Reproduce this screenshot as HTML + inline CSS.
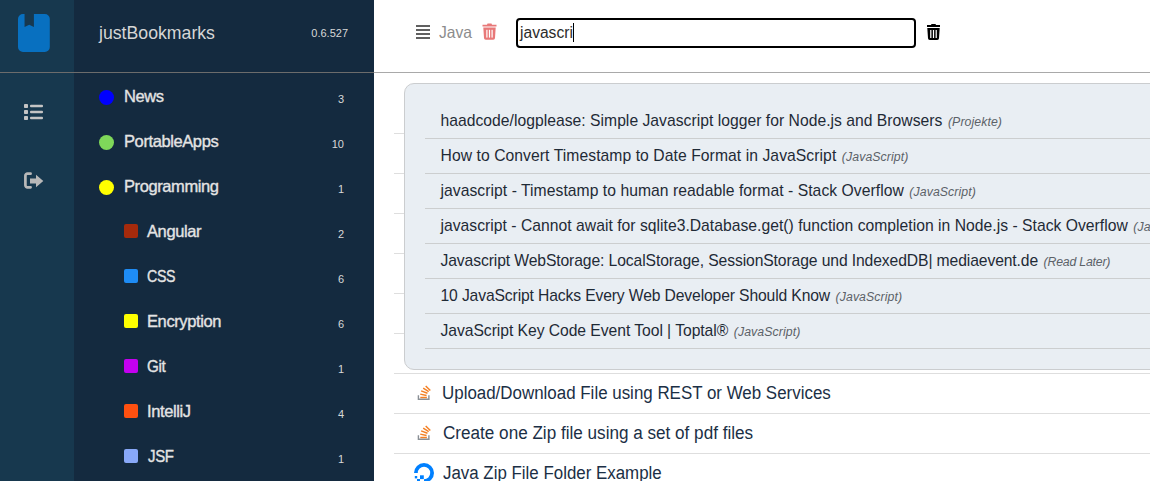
<!DOCTYPE html>
<html><head><meta charset="utf-8">
<style>
*{margin:0;padding:0;box-sizing:border-box}
html,body{width:1150px;height:481px;overflow:hidden;background:#fff;font-family:"Liberation Sans",sans-serif}
.a{position:absolute;white-space:nowrap;line-height:normal}
#rail{position:absolute;left:0;top:0;width:74px;height:481px;background:#17384e}
#side{position:absolute;left:74px;top:0;width:300px;height:481px;background:#142a3f}
.hl{position:absolute;height:1px}
.cat{transform-origin:0 0;color:#e4e4e4;font-size:16.5px;letter-spacing:-0.4px;-webkit-text-stroke:0.35px #e4e4e4}
.cnt{color:#d8d8d8;font-size:11px}
.dot{position:absolute;width:15px;height:15px;border-radius:50%}
.sq{position:absolute;width:14px;height:14px;border-radius:2px}
.div{position:absolute;height:1px;background:#dedede}
#panel{position:absolute;left:404px;top:83px;width:800px;height:287px;background:#e9eef3;border:1px solid #cbcdcf;border-radius:10px}
.pdiv{position:absolute;left:425px;width:725px;height:1px;background:#cccecf}
.pt{color:#1f2a36;font-size:15.7px}
.pt i{letter-spacing:0.08px;color:#5c6268;font-size:12.3px;font-style:italic;margin-left:5.5px}
.rt{color:#1b2f45;font-size:17.6px;transform-origin:0 0}
</style></head><body>
<div id="rail"></div>
<div id="side"></div>
<div class="hl" style="left:0;top:72px;width:374px;background:#6c6c6c"></div>
<div class="hl" style="left:374px;top:72px;width:776px;background:#a9a9a9"></div>

<!-- logo -->
<svg class="a" style="left:18px;top:14px" width="31.8" height="38" viewBox="0 0 32 38" preserveAspectRatio="none">
<path d="M5 0H6.6V13L11.3 10.8L16 13V0H27A5 5 0 0 1 32 5V33A5 5 0 0 1 27 38H5A5 5 0 0 1 0 33V5A5 5 0 0 1 5 0Z" fill="#0870c0"/>
</svg>
<div class="a" style="left:98.6px;top:21.9px;font-size:18.6px;color:#d6d6d6;transform-origin:0 0;transform:scaleX(0.951)">justBookmarks</div>
<div class="a cnt" style="right:802px;top:27px;">0.6.527</div>

<!-- rail icons -->
<svg class="a" style="left:24px;top:104px" width="20" height="16" viewBox="0 0 20 16">
<g fill="#c4c4c4"><rect x="0" y="0" width="4" height="4" rx="0.8"/><rect x="0" y="6" width="4" height="4" rx="0.8"/><rect x="0" y="12" width="4" height="4" rx="0.8"/>
<rect x="6" y="0.7" width="13" height="2.6" rx="1"/><rect x="6" y="6.7" width="13" height="2.6" rx="1"/><rect x="6" y="12.7" width="13" height="2.6" rx="1"/></g>
</svg>
<svg class="a" style="left:23px;top:172px" width="22" height="18" viewBox="0 0 22 18">
<path d="M7.6 1.7H4.5A2 2 0 0 0 2.4 3.7V13.3A2 2 0 0 0 4.5 15.3H7.6" fill="none" stroke="#b8b8b8" stroke-width="2.7" stroke-linecap="round"/>
<path d="M7 6.6H13V2.8L20.3 9L13 15.2V11.4H7Z" fill="#b8b8b8"/>
</svg>

<!-- categories -->
<div class="dot" style="left:99px;top:90px;background:#0000ff"></div>
<div class="a cat" style="left:124px;top:87.2px">News</div>
<div class="a cnt" style="right:806px;top:93px">3</div>

<div class="dot" style="left:99px;top:135px;background:#7fd85a"></div>
<div class="a cat" style="left:124px;top:132.2px">PortableApps</div>
<div class="a cnt" style="right:806px;top:138px">10</div>

<div class="dot" style="left:99px;top:180px;background:#ffff00"></div>
<div class="a cat" style="left:124px;top:177.2px">Programming</div>
<div class="a cnt" style="right:806px;top:183px">1</div>

<div class="sq" style="left:124px;top:224px;background:#a52a0c"></div>
<div class="a cat" style="left:147px;top:222.2px">Angular</div>
<div class="a cnt" style="right:806px;top:228px">2</div>

<div class="sq" style="left:124px;top:269px;background:#1e8cf5"></div>
<div class="a cat" style="left:147px;top:267.2px;transform:scaleX(0.86)">CSS</div>
<div class="a cnt" style="right:806px;top:273px">6</div>

<div class="sq" style="left:124px;top:314px;background:#ffff00"></div>
<div class="a cat" style="left:147px;top:312.2px">Encryption</div>
<div class="a cnt" style="right:806px;top:318px">6</div>

<div class="sq" style="left:124px;top:359px;background:#c400f0"></div>
<div class="a cat" style="left:147px;top:357.2px;transform:scaleX(0.92)">Git</div>
<div class="a cnt" style="right:806px;top:363px">1</div>

<div class="sq" style="left:124px;top:404px;background:#ff5010"></div>
<div class="a cat" style="left:147px;top:402.2px">IntelliJ</div>
<div class="a cnt" style="right:806px;top:408px">4</div>

<div class="sq" style="left:124px;top:449px;background:#88a8f8"></div>
<div class="a cat" style="left:148px;top:447.2px;transform:scaleX(0.91)">JSF</div>
<div class="a cnt" style="right:806px;top:453px">1</div>

<!-- top bar -->
<svg class="a" style="left:416px;top:25px" width="14" height="14" viewBox="0 0 14 14">
<g fill="#606060"><rect x="0" y="0" width="14" height="2"/><rect x="0" y="4" width="14" height="2"/><rect x="0" y="8" width="14" height="2"/><rect x="0" y="12" width="14" height="2"/></g>
</svg>
<div class="a" style="left:439px;top:22.9px;font-size:16.5px;color:#8c8c8c;transform-origin:0 0;transform:scaleX(0.947)">Java</div>
<svg class="a" style="left:482px;top:23px" width="15" height="17" viewBox="0 0 15 17">
<path d="M5.5 0.5H9.5L10 1.8H14.5V3.6H0.5V1.8H5Z M1.3 4.6H13.7L13 15A1.8 1.8 0 0 1 11.2 16.8H3.8A1.8 1.8 0 0 1 2 15Z" fill="#e87878"/>
<g fill="#fff"><rect x="4.3" y="6.8" width="1.2" height="7.8"/><rect x="6.9" y="6.8" width="1.2" height="7.8"/><rect x="9.5" y="6.8" width="1.2" height="7.8"/></g>
</svg>
<div class="a" style="left:516px;top:18px;width:400px;height:30px;border:2px solid #000;border-radius:4px"></div>
<div class="a" style="left:520px;top:23.8px;font-size:15.6px;color:#2b2b2b">javascri</div>
<div class="a" style="left:573px;top:23px;width:1px;height:19px;background:#000"></div>
<svg class="a" style="left:926px;top:24px" width="15" height="16" viewBox="0 0 15 16">
<path d="M5.5 0H9.5L10 1H14V3H1V1H5Z M1.3 4H13.7L13 14.2A1.8 1.8 0 0 1 11.2 16H3.8A1.8 1.8 0 0 1 2 14.2Z" fill="#000"/>
<g fill="#fff"><rect x="4.2" y="6" width="1.2" height="8"/><rect x="6.9" y="6" width="1.2" height="8"/><rect x="9.6" y="6" width="1.2" height="8"/></g>
</svg>

<!-- underlying list dividers -->
<div class="div" style="left:394px;top:133px;width:756px"></div>
<div class="div" style="left:394px;top:173px;width:756px"></div>
<div class="div" style="left:394px;top:213px;width:756px"></div>
<div class="div" style="left:394px;top:253px;width:756px"></div>
<div class="div" style="left:394px;top:293px;width:756px"></div>
<div class="div" style="left:394px;top:333px;width:756px"></div>
<div class="div" style="left:394px;top:373px;width:756px"></div>
<div class="div" style="left:394px;top:413px;width:756px"></div>
<div class="div" style="left:394px;top:453px;width:756px"></div>

<!-- rows -->
<svg class="a" style="left:412px;top:382px" width="24" height="22" viewBox="0 0 24 22">
<path d="M6.4 13.2V17.2H16.9V13.2" fill="none" stroke="#8a9096" stroke-width="1.4"/>
<g stroke="#f48024" stroke-width="1.45" fill="none"><path d="M8.3 15.5H14.9"/><path d="M8.2 12.1L14.6 13.5"/><path d="M9.1 8.9L15.5 11.2"/><path d="M11.2 6.2L16.7 9.6"/><path d="M13.7 3.9L18.3 8.5"/></g>
</svg>
<div class="a rt" style="left:442px;top:382.6px;transform:scaleX(0.9618)">Upload/Download File using REST or Web Services</div>
<svg class="a" style="left:412px;top:422px" width="24" height="22" viewBox="0 0 24 22">
<path d="M6.4 13.2V17.2H16.9V13.2" fill="none" stroke="#8a9096" stroke-width="1.4"/>
<g stroke="#f48024" stroke-width="1.45" fill="none"><path d="M8.3 15.5H14.9"/><path d="M8.2 12.1L14.6 13.5"/><path d="M9.1 8.9L15.5 11.2"/><path d="M11.2 6.2L16.7 9.6"/><path d="M13.7 3.9L18.3 8.5"/></g>
</svg>
<div class="a rt" style="left:442.5px;top:422.8px;transform:scaleX(0.9726)">Create one Zip file using a set of pdf files</div>
<svg class="a" style="left:413.8px;top:462px" width="22" height="22" viewBox="0 0 22 22">
<path d="M10 21V17.2A6.2 6.2 0 1 0 3.8 11H0A10 10 0 1 1 10 21Z" fill="#0080ff"/>
<rect x="6" y="13.3" width="3.8" height="3.8" fill="#0080ff"/><rect x="3" y="17" width="3" height="3" fill="#0080ff"/><rect x="0.8" y="14" width="2.4" height="2.4" fill="#0080ff"/>
</svg>
<div class="a rt" style="left:442.5px;top:462.8px;transform:scaleX(0.9599)">Java Zip File Folder Example</div>

<!-- dropdown panel -->
<div id="panel"></div>
<div class="pdiv" style="top:138px"></div>
<div class="pdiv" style="top:173px"></div>
<div class="pdiv" style="top:208px"></div>
<div class="pdiv" style="top:243px"></div>
<div class="pdiv" style="top:278px"></div>
<div class="pdiv" style="top:313px"></div>
<div class="pdiv" style="top:348px"></div>
<div class="a pt" style="left:440.5px;top:112.1px;letter-spacing:0.02px">haadcode/logplease: Simple Javascript logger for Node.js and Browsers<i>(Projekte)</i></div>
<div class="a pt" style="left:440.5px;top:147.1px;letter-spacing:0.066px">How to Convert Timestamp to Date Format in JavaScript<i>(JavaScript)</i></div>
<div class="a pt" style="left:440.5px;top:182.1px;letter-spacing:0.047px">javascript - Timestamp to human readable format - Stack Overflow<i>(JavaScript)</i></div>
<div class="a pt" style="left:440.5px;top:217.1px;letter-spacing:0.02px">javascript - Cannot await for sqlite3.Database.get() function completion in Node.js - Stack Overflow<i>(JavaScript)</i></div>
<div class="a pt" style="left:440.5px;top:252.1px;letter-spacing:-0.11px">Javascript WebStorage: LocalStorage, SessionStorage und IndexedDB| mediaevent.de<i style="letter-spacing:-0.2px">(Read Later)</i></div>
<div class="a pt" style="left:440.5px;top:287.1px;letter-spacing:-0.135px">10 JavaScript Hacks Every Web Developer Should Know<i>(JavaScript)</i></div>
<div class="a pt" style="left:440.5px;top:322.1px;letter-spacing:-0.05px">JavaScript Key Code Event Tool | Toptal®<i>(JavaScript)</i></div>
</body></html>
